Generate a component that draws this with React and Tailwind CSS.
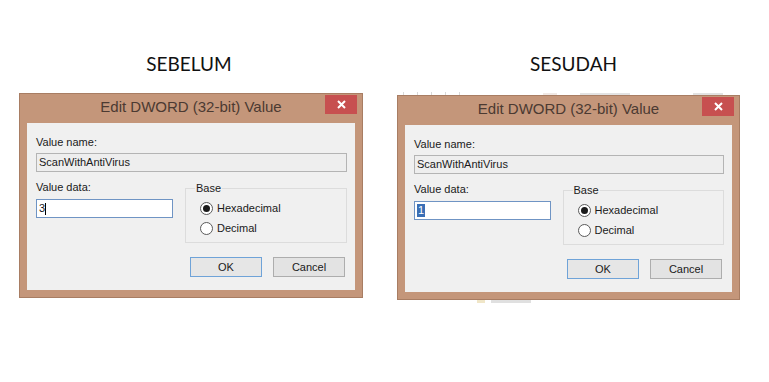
import React from "react";

const ui = { fontFamily: '"Liberation Sans", Arial, sans-serif' };

function Radio({ checked, label }) {
  return (
    <div className="flex items-center h-[13px]">
      <span className="w-[13px] h-[13px] rounded-full border border-[#5a5a5a] bg-white flex items-center justify-center">
        {checked && <span className="w-[7px] h-[7px] rounded-full bg-[#1a1a1a]" />}
      </span>
      <span className="ml-[4px] text-[11px] text-[#1a1a1a] leading-[13px]">{label}</span>
    </div>
  );
}

function EditDword({ value, selected }) {
  return (
    <div
      className="w-full h-[205px] bg-[#c4967a] border border-[#a87d63] flex flex-col"
      style={ui}
    >
      {/* Title bar */}
      <div className="relative h-[29px] flex items-center justify-center pb-[2px]">
        <span className="text-[15px] text-[#4b3a32]">Edit DWORD (32-bit) Value</span>
        <button className="absolute top-[1px] right-[5px] w-[32px] h-[19px] bg-[#c75050] flex items-center justify-center">
          <svg width="9" height="9" viewBox="0 0 9 9">
            <path d="M1 1 L8 8 M8 1 L1 8" stroke="white" strokeWidth="2" />
          </svg>
        </button>
      </div>

      {/* Client area */}
      <div className="mx-[7px] bg-[#f0f0f0] h-[167px] pl-[9px] pr-[8px] pt-[12px] text-[#1a1a1a]">
        <div className="text-[11px] leading-[14px]">Value name:</div>
        <div className="mt-[4px] h-[19px] border border-[#b4b4b4] bg-[#eeeeee] flex items-center px-[2px] text-[11px]">
          ScanWithAntiVirus
        </div>

        <div className="flex mt-[16px]">
          <div className="w-[137px] -mt-[8px]">
            <div className="text-[11px] leading-[14px]">Value data:</div>
            <div className="mt-[5px] h-[19px] border border-[#6f94c4] bg-white flex items-center px-[2px] text-[11px]">
              {selected ? (
                <span className="bg-[#3a6fb5] text-white px-[1px] leading-[13px]">{value}</span>
              ) : (
                <>
                  <span>{value}</span>
                  <span className="w-[1px] h-[12px] bg-black" />
                </>
              )}
            </div>
          </div>

          <div className="relative ml-[12px] w-[162px] h-[55px] border border-[#dcdcdc] pl-[14px] pt-[13px] flex flex-col gap-[7px]">
            <span className="absolute -top-[8px] left-[9px] bg-[#f0f0f0] px-[1px] text-[11px] leading-[14px]">
              Base
            </span>
            <Radio checked label="Hexadecimal" />
            <Radio label="Decimal" />
          </div>
        </div>

        <div className="flex justify-end gap-[11px] mt-[14px] pr-[2px]">
          <button className="w-[72px] h-[20px] border border-[#6fa3d8] bg-[#e6e6e6] text-[11px]">
            OK
          </button>
          <button className="w-[72px] h-[20px] border border-[#adadad] bg-[#e3e3e3] text-[11px]">
            Cancel
          </button>
        </div>
      </div>
    </div>
  );
}

export default function App() {
  return (
    <div className="w-[769px] h-[382px] bg-white flex pt-[52px]">
      {/* Before */}
      <div className="ml-[19px] w-[344px]">
        <h2
          className="h-[24px] leading-[24px] text-center pr-[4px] text-[19px] text-[#111]"
          style={{ fontFamily: "Lato, sans-serif" }}
        >
          SEBELUM
        </h2>
        <div className="mt-[17px]">
          <EditDword value="3" />
        </div>
      </div>

      {/* After */}
      <div className="ml-[34px] w-[343px]">
        <h2
          className="h-[24px] leading-[24px] text-center pl-[10px] text-[19px] text-[#111]"
          style={{ fontFamily: "Lato, sans-serif" }}
        >
          SESUDAH
        </h2>
        {/* bits of the window behind the dialog */}
        <div className="mt-[15px] h-[4px] flex items-end gap-[13px] pl-[6px]">
          <span className="w-[1px] h-[3px] bg-[#d8d8d8]" />
          <span className="w-[1px] h-[3px] bg-[#d8d8d8]" />
          <span className="w-[1px] h-[3px] bg-[#d8d8d8]" />
          <span className="w-[1px] h-[3px] bg-[#d8d8d8]" />
          <span className="w-[1px] h-[3px] bg-[#d8d8d8]" />
          <span className="ml-[70px] w-[14px] h-[2px] bg-[#f0e8e4]" />
          <span className="ml-[10px] w-[50px] h-[2px] bg-[#e2e2e2]" />
          <span className="ml-[50px] w-[30px] h-[2px] bg-[#e2e2e2]" />
        </div>
        <EditDword value="1" selected />
        <div className="h-[5px] flex items-start gap-[6px] pl-[80px]">
          <span className="w-[8px] h-[3px] bg-[#f0e6c8]" />
          <span className="w-[40px] h-[3px] bg-[#e0e0e0]" />
        </div>
      </div>
    </div>
  );
}
